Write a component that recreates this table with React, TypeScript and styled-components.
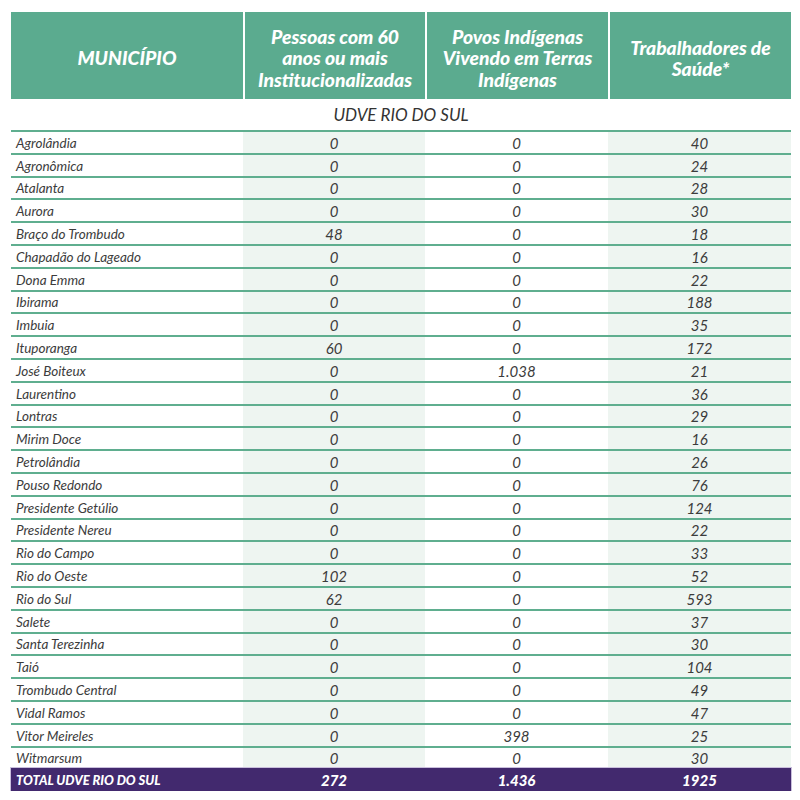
import React from "react";
import styled, { createGlobalStyle } from "styled-components";

const GlobalStyle = createGlobalStyle`
  body {
    margin: 0;
    background: #ffffff;
    font-family: Lato, "Open Sans", sans-serif;
  }
`;

const Page = styled.div`
  padding: 12px 0 0 11px;
`;

const Table = styled.div`
  width: 780px;
  display: flex;
  flex-direction: column;
`;

const columns = "232px 182px 183px 183px";

const HeaderRow = styled.div`
  display: grid;
  grid-template-columns: ${columns};
  height: 87px;
  background: #5bab8f;
`;

const HeaderCell = styled.div<{ $first?: boolean }>`
  display: flex;
  align-items: center;
  justify-content: center;
  text-align: center;
  color: #ffffff;
  font-style: italic;
  font-weight: 900;
  font-size: 19.3px;
  line-height: 21.5px;
  border-left: ${(p) => (p.$first ? "none" : "2px solid #ffffff")};
  padding: 5px 2px 0;
`;

const SectionRow = styled.div`
  height: 31px;
  display: flex;
  align-items: center;
  justify-content: center;
  font-style: italic;
  font-size: 17px;
  color: #333333;
  box-sizing: border-box;
`;

const Row = styled.div`
  display: grid;
  grid-template-columns: ${columns};
  height: 22.8px;
  box-sizing: border-box;
  border-top: 2px solid #5fae8f;
`;

const Cell = styled.div<{ $tint?: boolean; $name?: boolean }>`
  display: flex;
  align-items: center;
  justify-content: ${(p) => (p.$name ? "flex-start" : "center")};
  padding-left: ${(p) => (p.$name ? "5px" : "0")};
  padding-top: 1px;
  background: ${(p) => (p.$tint ? "#eef5f1" : "#ffffff")};
  font-style: italic;
  font-size: ${(p) => (p.$name ? "13.5px" : "15px")};
  color: #3c3c3c;
  white-space: nowrap;
`;

const TotalRow = styled.div`
  display: grid;
  grid-template-columns: ${columns};
  height: 23px;
  background: #42296e;
  box-shadow: 0 0 0 1px #c9bfdc;
`;

const TotalCell = styled.div<{ $name?: boolean }>`
  display: flex;
  align-items: center;
  justify-content: ${(p) => (p.$name ? "flex-start" : "center")};
  padding-left: ${(p) => (p.$name ? "5px" : "0")};
  color: #ffffff;
  font-style: italic;
  font-weight: 900;
  font-size: ${(p) => (p.$name ? "13px" : "15px")};
`;

const rows: [string, string, string, string][] = [
  ["Agrolândia", "0", "0", "40"],
  ["Agronômica", "0", "0", "24"],
  ["Atalanta", "0", "0", "28"],
  ["Aurora", "0", "0", "30"],
  ["Braço do Trombudo", "48", "0", "18"],
  ["Chapadão do Lageado", "0", "0", "16"],
  ["Dona Emma", "0", "0", "22"],
  ["Ibirama", "0", "0", "188"],
  ["Imbuia", "0", "0", "35"],
  ["Ituporanga", "60", "0", "172"],
  ["José Boiteux", "0", "1.038", "21"],
  ["Laurentino", "0", "0", "36"],
  ["Lontras", "0", "0", "29"],
  ["Mirim Doce", "0", "0", "16"],
  ["Petrolândia", "0", "0", "26"],
  ["Pouso Redondo", "0", "0", "76"],
  ["Presidente Getúlio", "0", "0", "124"],
  ["Presidente Nereu", "0", "0", "22"],
  ["Rio do Campo", "0", "0", "33"],
  ["Rio do Oeste", "102", "0", "52"],
  ["Rio do Sul", "62", "0", "593"],
  ["Salete", "0", "0", "37"],
  ["Santa Terezinha", "0", "0", "30"],
  ["Taió", "0", "0", "104"],
  ["Trombudo Central", "0", "0", "49"],
  ["Vidal Ramos", "0", "0", "47"],
  ["Vitor Meireles", "0", "398", "25"],
  ["Witmarsum", "0", "0", "30"],
];

export default function App() {
  return (
    <Page>
      <GlobalStyle />
      <Table>
        <HeaderRow>
          <HeaderCell $first>MUNICÍPIO</HeaderCell>
          <HeaderCell>
            Pessoas com 60
            <br />
            anos ou mais
            <br />
            Institucionalizadas
          </HeaderCell>
          <HeaderCell>
            Povos Indígenas
            <br />
            Vivendo em Terras
            <br />
            Indígenas
          </HeaderCell>
          <HeaderCell>
            Trabalhadores de
            <br />
            Saúde*
          </HeaderCell>
        </HeaderRow>
        <SectionRow>UDVE RIO DO SUL</SectionRow>
        {rows.map(([name, a, b, c]) => (
          <Row key={name}>
            <Cell $name>{name}</Cell>
            <Cell $tint>{a}</Cell>
            <Cell>{b}</Cell>
            <Cell $tint>{c}</Cell>
          </Row>
        ))}
        <TotalRow>
          <TotalCell $name>TOTAL UDVE RIO DO SUL</TotalCell>
          <TotalCell>272</TotalCell>
          <TotalCell>1.436</TotalCell>
          <TotalCell>1925</TotalCell>
        </TotalRow>
      </Table>
    </Page>
  );
}
